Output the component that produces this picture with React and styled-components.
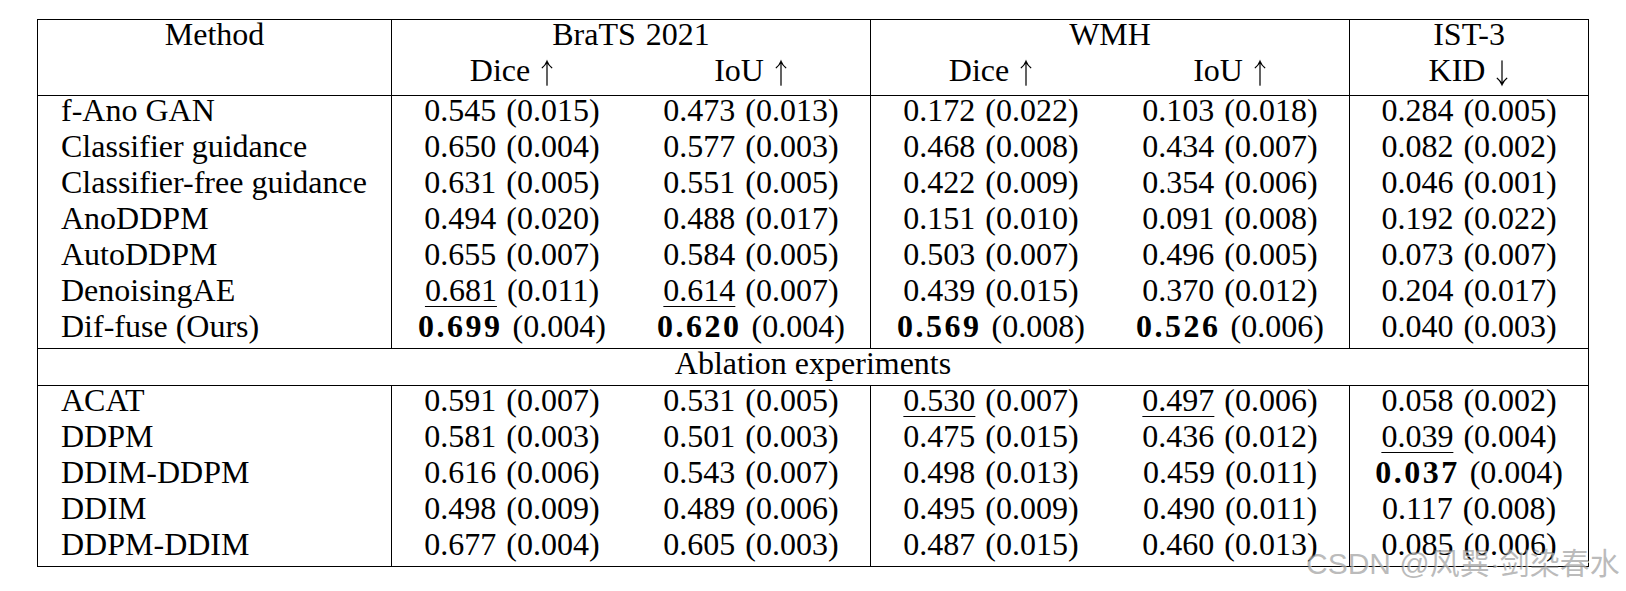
import React from 'react';
import styled, { createGlobalStyle } from 'styled-components';

const rows = [
    ['f-Ano GAN', ['0.545', '0.015'], ['0.473', '0.013'], ['0.172', '0.022'], ['0.103', '0.018'], ['0.284', '0.005']],
    ['Classifier guidance', ['0.650', '0.004'], ['0.577', '0.003'], ['0.468', '0.008'], ['0.434', '0.007'], ['0.082', '0.002']],
    ['Classifier-free guidance', ['0.631', '0.005'], ['0.551', '0.005'], ['0.422', '0.009'], ['0.354', '0.006'], ['0.046', '0.001']],
    ['AnoDDPM', ['0.494', '0.020'], ['0.488', '0.017'], ['0.151', '0.010'], ['0.091', '0.008'], ['0.192', '0.022']],
    ['AutoDDPM', ['0.655', '0.007'], ['0.584', '0.005'], ['0.503', '0.007'], ['0.496', '0.005'], ['0.073', '0.007']],
    ['DenoisingAE', ['0.681', '0.011', 'u'], ['0.614', '0.007', 'u'], ['0.439', '0.015'], ['0.370', '0.012'], ['0.204', '0.017']],
    ['Dif-fuse (Ours)', ['0.699', '0.004', 'b'], ['0.620', '0.004', 'b'], ['0.569', '0.008', 'b'], ['0.526', '0.006', 'b'], ['0.040', '0.003']],
];

const ablation = [
    ['ACAT', ['0.591', '0.007'], ['0.531', '0.005'], ['0.530', '0.007', 'u'], ['0.497', '0.006', 'u'], ['0.058', '0.002']],
    ['DDPM', ['0.581', '0.003'], ['0.501', '0.003'], ['0.475', '0.015'], ['0.436', '0.012'], ['0.039', '0.004', 'u']],
    ['DDIM-DDPM', ['0.616', '0.006'], ['0.543', '0.007'], ['0.498', '0.013'], ['0.459', '0.011'], ['0.037', '0.004', 'b']],
    ['DDIM', ['0.498', '0.009'], ['0.489', '0.006'], ['0.495', '0.009'], ['0.490', '0.011'], ['0.117', '0.008']],
    ['DDPM-DDIM', ['0.677', '0.004'], ['0.605', '0.003'], ['0.487', '0.015'], ['0.460', '0.013'], ['0.085', '0.006']],
];

// columns that carry a vertical rule on their right side
const ruled = [true, false, true, false, true, false];

// thin math-style arrow (\uparrow / \downarrow)
function Arrow({ down }) {
    return (
        <ArrowSvg viewBox="0 0 16 30" $down={down}>
            <path
                d="M8 29V2.5 M2.5 9 Q6 6.5 8 1.5 Q10 6.5 13.5 9"
                fill="none"
                stroke="#000"
                strokeWidth="1.4"
                strokeLinecap="round"
            />
        </ArrowSvg>
    );
}

function Metric({ label, down }) {
    return (
        <>
            {label} <Arrow down={down} />
        </>
    );
}

function Score({ value }) {
    const [mean, sd, mark] = value;
    let head = mean;
    if (mark === 'b') head = <Best>{mean}</Best>;
    if (mark === 'u') head = <Second>{mean}</Second>;
    return (
        <>
            {head} ({sd})
        </>
    );
}

function BodyRow({ row, last }) {
    const [name, ...scores] = row;
    return (
        <tr>
            <NameCell $last={last}>{name}</NameCell>
            {scores.map((s, i) => (
                <Cell key={i} $rule={ruled[i + 1]} $last={last}>
                    <Score value={s} />
                </Cell>
            ))}
        </tr>
    );
}

function App() {
    return (
        <Page>
            <GlobalStyle />
            <Table>
                <colgroup>
                    <col style={{ width: 354 }} />
                    <col style={{ width: 240 }} />
                    <col style={{ width: 239 }} />
                    <col style={{ width: 240 }} />
                    <col style={{ width: 239 }} />
                    <col style={{ width: 238 }} />
                </colgroup>
                <thead>
                    <tr>
                        <Head $rule>Method</Head>
                        <Head colSpan={2} $rule>BraTS 2021</Head>
                        <Head colSpan={2} $rule>WMH</Head>
                        <Head>IST-3</Head>
                    </tr>
                    <tr>
                        <Head $rule $last></Head>
                        <Head $last><Metric label="Dice" /></Head>
                        <Head $rule $last><Metric label="IoU" /></Head>
                        <Head $last><Metric label="Dice" /></Head>
                        <Head $rule $last><Metric label="IoU" /></Head>
                        <Head $last><Metric label="KID" down /></Head>
                    </tr>
                </thead>
                <tbody>
                    {rows.map((r, i) => (
                        <BodyRow key={r[0]} row={r} last={i === rows.length - 1} />
                    ))}
                    <tr>
                        <SectionCell colSpan={6}>Ablation experiments</SectionCell>
                    </tr>
                    {ablation.map((r) => (
                        <BodyRow key={r[0]} row={r} />
                    ))}
                </tbody>
            </Table>
            <Watermark>CSDN @风巽·剑染春水</Watermark>
        </Page>
    );
}

const GlobalStyle = createGlobalStyle`
    html, body {
        margin: 0;
        padding: 0;
        background: #fff;
    }
`;

const Page = styled.div`
    position: relative;
    width: 1626px;
    height: 591px;
    box-sizing: border-box;
    padding: 19px 0 0 37px;
    overflow: hidden;
    font-family: 'Liberation Serif', 'Times New Roman', serif;
    color: #000;
`;

const Table = styled.table`
    table-layout: fixed;
    border-collapse: separate;
    border-spacing: 0;
    border: 1px solid #000;
    width: 1552px;
    font-size: 32px;
`;

const Cell = styled.td`
    height: 28px;
    padding: 0 0 8px;
    line-height: 28px;
    vertical-align: top;
    text-align: center;
    white-space: nowrap;
    word-spacing: 2px;
    border-right: ${(p) => (p.$rule ? '1px solid #000' : 'none')};
    border-bottom: ${(p) => (p.$last ? '1px solid #000' : 'none')};
`;

const NameCell = styled(Cell)`
    text-align: left;
    padding-left: 23px;
    word-spacing: 0;
    border-right: 1px solid #000;
`;

const Head = styled(Cell).attrs({ as: 'th' })`
    font-weight: 400;
`;

const SectionCell = styled(Cell)`
    border-bottom: 1px solid #000;
    word-spacing: 0;
`;

const ArrowSvg = styled.svg`
    width: 14px;
    height: 28px;
    vertical-align: -6px;
    transform: ${(p) => (p.$down ? 'rotate(180deg)' : 'none')};
`;

const Best = styled.span`
    font-weight: 700;
    letter-spacing: 2.5px;
`;

const Second = styled.span`
    text-decoration: underline;
    text-decoration-thickness: 1px;
    text-underline-offset: 5px;
`;

const Watermark = styled.div`
    position: absolute;
    left: 1306px;
    top: 546px;
    font-family: 'Liberation Sans', 'Noto Sans CJK SC', sans-serif;
    font-size: 30px;
    line-height: 36px;
    white-space: nowrap;
    color: rgba(120, 120, 120, 0.5);
    text-shadow: 1px 1px 0 rgba(255, 255, 255, 0.6);
    pointer-events: none;
`;

export default App;
